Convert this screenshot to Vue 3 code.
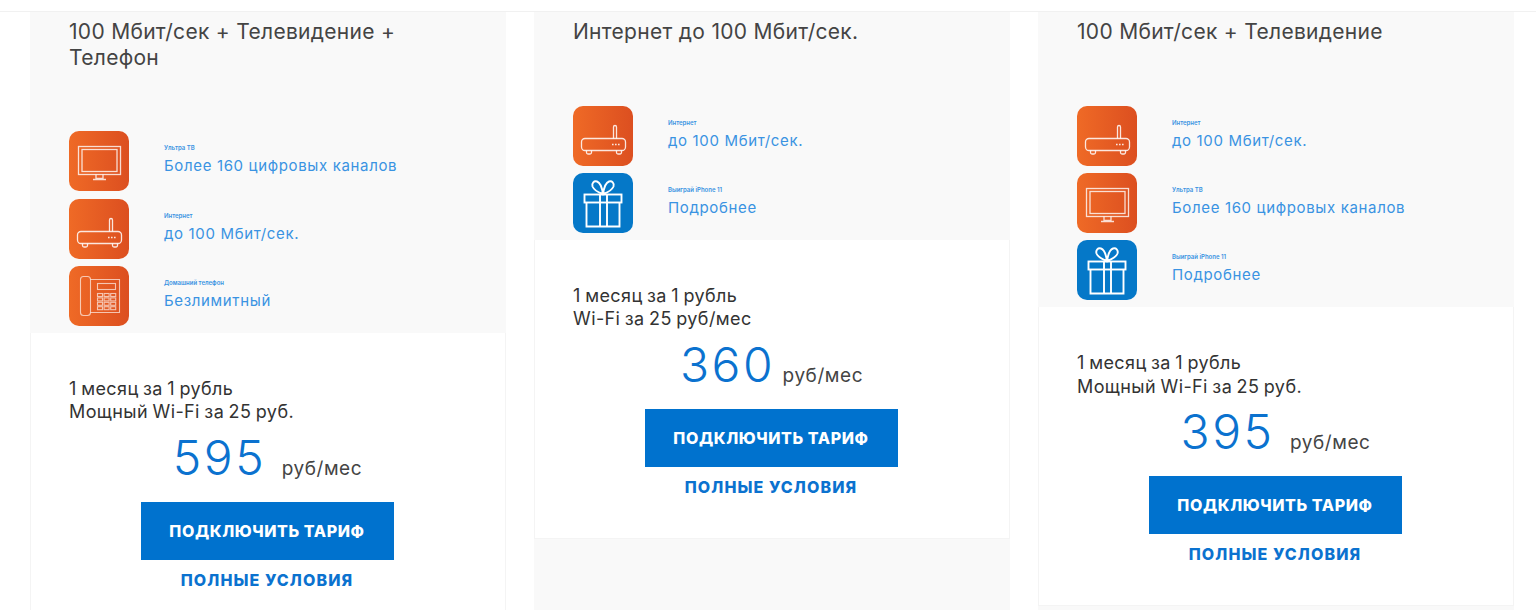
<script setup>
const featureData = {
  tv: { label: 'Ультра ТВ', text: 'Более 160 цифровых каналов' },
  net: { label: 'Интернет', text: 'до 100 Мбит/сек.' },
  phone: { label: 'Домашний телефон', text: 'Безлимитный' },
  gift: { label: 'Выиграй iPhone 11', text: 'Подробнее' }
}
const cards = [
  { title: '100 Мбит/сек + Телевидение + Телефон', features: ['tv', 'net', 'phone'], promo: 'Мощный Wi-Fi за 25 руб.', price: '595', wide: true },
  { title: 'Интернет до 100 Мбит/сек.', features: ['net', 'gift'], promo: 'Wi-Fi за 25 руб/мес', price: '360', wide: false },
  { title: '100 Мбит/сек + Телевидение', features: ['net', 'tv', 'gift'], promo: 'Мощный Wi-Fi за 25 руб.', price: '395', wide: true }
]
const keys = []
for (let r = 0; r < 4; r++) for (let c = 0; c < 3; c++) keys.push({ x: 28.5 + c * 6.6, y: 27.5 + r * 4.4 })
</script>

<template>
  <div class="page">
    <div class="topbar"></div>
    <div class="cards">
      <article v-for="card in cards" :key="card.price" class="card">
        <div class="head">
          <h3 class="title">{{ card.title }}</h3>
          <ul class="features">
            <li v-for="f in card.features" :key="f" class="feature">
              <span class="icon" :class="f === 'gift' ? 'icon-blue' : 'icon-orange'">
                <svg width="60" height="60" viewBox="0 0 60 60" fill="none" stroke="#fff">
                  <g v-if="f === 'tv'" stroke-opacity=".8" stroke-width="1.300">
                    <rect x="9.500" y="15.500" width="42" height="28" />
                    <rect x="13" y="18.500" width="35" height="22" />
                    <path d="M27 43.500v4h7v-4M24 48.500h13" />
                  </g>
                  <g v-else-if="f === 'net'" stroke-opacity=".85" stroke-width="1.300">
                    <rect x="8.500" y="32.500" width="44" height="12" rx="3.500" />
                    <path d="M40.500 32.500V21a1.500 1.500 0 0 1 3 0v11.500" />
                    <path d="M13.500 44.500v2a1.500 1.500 0 0 0 1.500 1.500h2a1.500 1.500 0 0 0 1.500-1.500v-2M43.500 44.500v2a1.500 1.500 0 0 0 1.500 1.500h2a1.500 1.500 0 0 0 1.500-1.500v-2" />
                    <path d="M39 38.500h1.600M42 38.500h1.600M45 38.500h1.600" stroke-width="1.400" />
                  </g>
                  <g v-else-if="f === 'phone'" stroke-opacity=".65" stroke-width="1.100">
                    <rect x="11.500" y="10.500" width="10" height="39" rx="3" />
                    <path d="M21.500 13.500h29v33h-29" />
                    <rect x="28.500" y="17.500" width="18" height="6" />
                    <rect v-for="(k, i) in keys" :key="i" :x="k.x" :y="k.y" width="5" height="3" />
                  </g>
                  <g v-else stroke-width="1.900">
                    <rect x="11.500" y="21.500" width="37" height="8" />
                    <path d="M13.500 29.500v24h33v-24M27 21.500v32M34 21.500v32" />
                    <path d="M30 21c-3-1-9-4-10.500-7.500C18.500 10 21 7.500 24 8.500c3 1 5 6 6 12.500zM30 21c3-1 9-4 10.500-7.500C41.500 10 39 7.500 36 8.500c-3 1-5 6-6 12.500z" />
                  </g>
                </svg>
              </span>
              <span class="feature-text">
                <small class="label">{{ featureData[f].label }}</small>
                <span class="value">{{ featureData[f].text }}</span>
              </span>
            </li>
          </ul>
        </div>
        <div class="body">
          <p class="promo">1 месяц за 1 рубль<br />{{ card.promo }}</p>
          <div class="price">
            <span class="amount" :class="{ wide: card.wide }">{{ card.price }}</span>
            <span class="unit">руб/мес</span>
          </div>
          <button class="cta" type="button">ПОДКЛЮЧИТЬ ТАРИФ</button>
          <a class="terms" href="#">ПОЛНЫЕ УСЛОВИЯ</a>
        </div>
      </article>
    </div>
  </div>
</template>

<style>
html, body { margin: 0; background: #fff; overflow: hidden; }
</style>

<style scoped>
.page {
  height: 610px;
  overflow: hidden;
  font-family: Inter, "Noto Sans", sans-serif;
  background: #fff;
}
.topbar {
  height: 11px;
  border-bottom: 1px solid #f1f1f1;
}
.cards {
  display: flex;
  gap: 28px;
  padding-left: 30px;
}
.card {
  width: 476px;
  height: 620px;
  flex: none;
  background: #f9f9f9;
}
.head {
  padding: 7px 39px 6.900px;
}
.title {
  margin: 0 0 61.200px;
  font-size: 21px;
  line-height: 25.500px;
  font-weight: 400;
  letter-spacing: .3px;
  color: #444;
}
.features {
  list-style: none;
  margin: 0;
  padding: 0;
  display: flex;
  flex-direction: column;
  gap: 7.400px;
}
.feature {
  display: flex;
  align-items: center;
  gap: 35px;
}
.icon {
  width: 60px;
  height: 60px;
  flex: none;
  display: block;
  border-radius: 10px;
}
.icon svg { display: block; }
.icon-orange { background: linear-gradient(90deg, #ef6a26, #dc4f20); }
.icon-blue { background: #0578c8; }
.feature-text {
  display: flex;
  flex-direction: column;
  margin-bottom: 2px;
}
.label {
  font-size: 6px;
  line-height: 8px;
  color: #3a93e2;
  font-weight: 600;
  margin-bottom: 4px;
}
.value {
  font-size: 15px;
  line-height: 20px;
  letter-spacing: .65px;
  color: #3a93e2;
}
.body {
  height: 299px;
  box-sizing: border-box;
  padding: 44px 40px 0 38px;
  background: #fff;
  border: 1px solid #f4f4f4;
  border-top: 0;
  display: flex;
  flex-direction: column;
  align-items: center;
}
.promo {
  align-self: stretch;
  margin: 0;
  font-size: 18px;
  line-height: 23.500px;
  letter-spacing: .4px;
  word-spacing: -1px;
  color: #333;
  white-space: nowrap;
}
.price {
  display: flex;
  align-items: baseline;
  justify-content: center;
  margin-top: 4px;
  padding-left: 1px;
  height: 74px;
}
.amount {
  font-size: 48px;
  line-height: 60px;
  font-weight: 300;
  letter-spacing: 2.500px;
  color: #0b72cf;
  margin-right: 7.500px;
}
.amount.wide { margin-right: 15.500px; }
.unit {
  font-size: 19px;
  letter-spacing: .55px;
  color: #444;
}
.cta {
  width: 253px;
  height: 58px;
  padding: 0;
  border: 0;
  background: #0072ce;
  color: #fff;
  font: 800 16px Inter, "Noto Sans", sans-serif;
  letter-spacing: .6px;
}
.terms {
  margin-top: 10px;
  font-size: 16px;
  line-height: 20px;
  font-weight: 800;
  letter-spacing: 1.100px;
  color: #0b72cf;
  text-decoration: none;
}
</style>
